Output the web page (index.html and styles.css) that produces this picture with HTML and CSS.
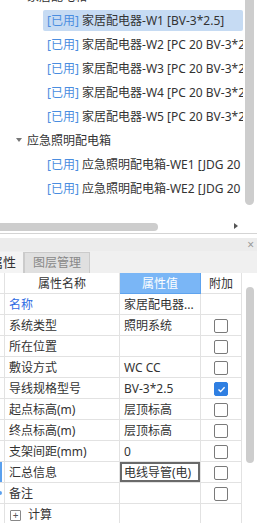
FILE: index.html
```html
<!DOCTYPE html>
<html>
  <head>
    <title>配电箱属性</title>
    <link rel="stylesheet" href="styles.css">
  </head>
  <body>
    <div class="tree-panel">
      <div class="tree-main">
        <div class="tree-view">
          <div class="tree-list">
            <div class="node parent">家居配电箱</div>
            <div class="node child"><span class="item selected"><span class="used">[已用]</span> 家居配电器-W1 [BV-3*2.5]</span></div>
            <div class="node child"><span class="item"><span class="used">[已用]</span> 家居配电器-W2 [PC 20 BV-3*2.5]</span></div>
            <div class="node child"><span class="item"><span class="used">[已用]</span> 家居配电器-W3 [PC 20 BV-3*2.5]</span></div>
            <div class="node child"><span class="item"><span class="used">[已用]</span> 家居配电器-W4 [PC 20 BV-3*2.5]</span></div>
            <div class="node child"><span class="item"><span class="used">[已用]</span> 家居配电器-W5 [PC 20 BV-3*2.5]</span></div>
            <div class="node parent"><span class="caret"></span>应急照明配电箱</div>
            <div class="node child"><span class="item"><span class="used">[已用]</span> 应急照明配电箱-WE1 [JDG 20 BV-3*2.5]</span></div>
            <div class="node child"><span class="item"><span class="used">[已用]</span> 应急照明配电箱-WE2 [JDG 20 BV-3*2.5]</span></div>
          </div>
        </div>
        <div class="vscroll">
          <div class="vthumb top-thumb"></div>
        </div>
      </div>
      <div class="hscroll">
        <div class="hthumb"></div>
        <span class="arrow-right"></span>
      </div>
    </div>

    <div class="props-panel">
      <div class="panel-bar">
        <span class="close">×</span>
      </div>
      <div class="tabs">
        <div class="tab active">属性</div>
        <div class="tab">图层管理</div>
      </div>
      <div class="props-body">
        <table class="props">
          <tr class="head">
            <th class="c0"></th>
            <th class="c1">属性名称</th>
            <th class="c2 hl">属性值</th>
            <th class="c3">附加</th>
          </tr>
          <tr><td class="c0"></td><td class="c1 blue">名称</td><td class="c2">家居配电器...</td><td class="c3"></td></tr>
          <tr><td class="c0"></td><td class="c1">系统类型</td><td class="c2">照明系统</td><td class="c3"><span class="box"></span></td></tr>
          <tr><td class="c0"></td><td class="c1">所在位置</td><td class="c2"></td><td class="c3"><span class="box"></span></td></tr>
          <tr><td class="c0"></td><td class="c1">敷设方式</td><td class="c2">WC CC</td><td class="c3"><span class="box"></span></td></tr>
          <tr><td class="c0"></td><td class="c1">导线规格型号</td><td class="c2">BV-3*2.5</td><td class="c3"><span class="box checked"><svg width="9" height="9" viewBox="0 0 9 9"><path d="M1.5 4.6 L3.6 6.6 L7.6 2.2" fill="none" stroke="#fff" stroke-width="1.4"/></svg></span></td></tr>
          <tr><td class="c0"></td><td class="c1">起点标高(m)</td><td class="c2">层顶标高</td><td class="c3"><span class="box"></span></td></tr>
          <tr><td class="c0"></td><td class="c1">终点标高(m)</td><td class="c2">层顶标高</td><td class="c3"><span class="box"></span></td></tr>
          <tr><td class="c0"></td><td class="c1">支架间距(mm)</td><td class="c2">0</td><td class="c3"><span class="box"></span></td></tr>
          <tr><td class="c0 marker"></td><td class="c1">汇总信息</td><td class="c2 editing">电线导管(电)</td><td class="c3"><span class="box"></span></td></tr>
          <tr><td class="c0"><span class="dot"></span></td><td class="c1">备注</td><td class="c2"></td><td class="c3"><span class="box"></span></td></tr>
          <tr><td class="c0"></td><td class="c1"><span class="plus">+</span>计算</td><td class="c2"></td><td class="c3"></td></tr>
        </table>
        <div class="vscroll low">
          <div class="vthumb bottom-thumb"></div>
        </div>
      </div>
    </div>
  </body>
</html>
```

FILE: styles.css
```css
body {
  margin: 0;
  width: 257px;
  height: 523px;
  overflow: hidden;
  background: #fff;
  font-family: "Noto Sans", "Noto Sans CJK SC", sans-serif;
  font-size: 12px;
  color: #333;
}
.tree-panel {
  height: 233px;
  border-bottom: 1px solid #d4d4d4;
}
.tree-main {
  display: flex;
  height: 222px;
}
.tree-view {
  width: 243px;
  overflow: hidden;
}
.tree-list {
  margin-top: -16px;
}
.node {
  height: 24px;
  display: flex;
  align-items: center;
  white-space: nowrap;
}
.node.parent {
  padding-left: 27px;
  position: relative;
}
.caret {
  position: absolute;
  left: 16px;
  top: 10px;
  border-left: 3.5px solid transparent;
  border-right: 3.5px solid transparent;
  border-top: 4px solid #777;
}
.node.child {
  padding-left: 43px;
}
.item {
  padding: 0 4px;
  height: 21px;
  line-height: 21px;
  border-radius: 2px;
  flex: 1;
}
.item.selected {
  background: #c6dbf3;
}
.used {
  color: #4a8de0;
}
.vscroll {
  width: 14px;
}
.vthumb {
  width: 9px;
  margin-left: 2px;
  background: #cdcdcd;
  border-radius: 0 0 5px 5px;
}
.top-thumb {
  height: 205px;
}
.hscroll {
  display: flex;
  align-items: center;
  height: 9px;
  position: relative;
}
.hthumb {
  width: 158px;
  height: 8px;
  background: #cdcdcd;
  border-radius: 0 4px 4px 0;
}
.arrow-right {
  position: absolute;
  left: 234px;
  top: 1px;
  border-top: 3.5px solid transparent;
  border-bottom: 3.5px solid transparent;
  border-left: 4px solid #555;
}
.props-panel {
  margin-top: 4px;
}
.panel-bar {
  height: 13px;
  background: #ececec;
  display: flex;
  justify-content: flex-end;
  align-items: center;
}
.close {
  color: #9a9a9a;
  font-size: 12px;
  line-height: 13px;
  margin-right: 3px;
}
.tabs {
  display: flex;
  height: 22px;
  background: #f0f0f0;
}
.tab {
  padding: 0 8px;
  font-size: 12px;
  color: #888;
  background: #e0e0e0;
  border: 1px solid #cbcbcb;
  border-bottom: none;
  height: 21px;
  margin-top: 1px;
  box-sizing: border-box;
  line-height: 20px;
}
.tab.active {
  margin-left: -10px;
  color: #333;
  background: #f4f4f4;
  border: none;
  border-right: 1px solid #cbcbcb;
  width: 34px;
  padding: 0;
  font-size: 13px;
}
.props-body {
  display: flex;
  height: 250px;
  overflow: hidden;
}
.props {
  border-collapse: collapse;
  table-layout: fixed;
  width: 242px;
  margin-top: 0;
}
.props th,
.props td {
  border: 1px solid #e2e2e2;
  height: 20px;
  padding: 0;
  font-weight: normal;
  white-space: nowrap;
  overflow: hidden;
}
.props tr:first-child th {
  border-top: none;
}
.c0 {
  width: 4px;
  border-left: none !important;
  position: relative;
}
.c1 {
  width: 114px;
}
.c2 {
  width: 80px;
}
.c3 {
  width: 40px;
  text-align: center;
}
.props td.c1 {
  padding-left: 4px;
}
.props td.c2 {
  padding-left: 4px;
}
.head th {
  text-align: center;
  color: #333;
}
.head th.hl {
  background: #7ab6f6;
  color: #fff;
  border: 1px solid #5ea3ee;
}
.blue {
  color: #2f6be3;
}
.editing {
  box-shadow: inset 0 0 0 2px #6a6a6a;
}
.marker {
  box-shadow: inset 2px 0 0 #5aa0ee;
}
.dot {
  position: absolute;
  left: -2px;
  top: 8px;
  width: 4px;
  height: 4px;
  border-radius: 50%;
  background: #5aa0ee;
}
.box {
  display: inline-block;
  width: 12px;
  height: 12px;
  border: 1px solid #7a7a7a;
  border-radius: 2px;
  vertical-align: middle;
  background: #fff;
}
.box.checked {
  background: #2f7fe2;
  border-color: #2f7fe2;
  display: inline-flex;
  align-items: center;
  justify-content: center;
}
.plus {
  display: inline-block;
  width: 9px;
  height: 9px;
  border: 1px solid #888;
  border-radius: 1px;
  font-size: 10px;
  line-height: 9px;
  text-align: center;
  color: #555;
  margin: 0 7px 0 1px;
  vertical-align: middle;
}
.vscroll.low {
  padding-top: 14px;
}
.bottom-thumb {
  height: 176px;
  border-radius: 5px;
  margin-left: 4px;
  width: 8px;
}
```
